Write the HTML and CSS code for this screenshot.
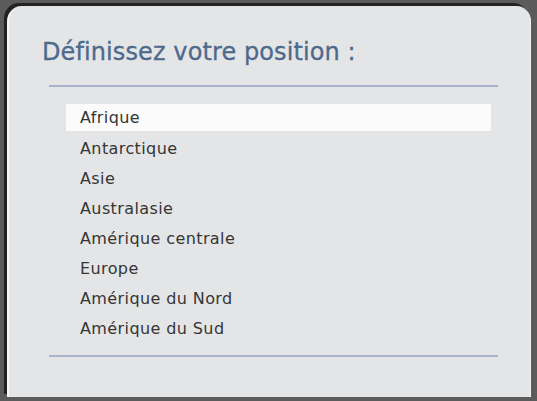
FILE: index.html
```html
<!DOCTYPE html>
<html lang="fr">
<head>
    <meta charset="UTF-8">
    <meta name="viewport" content="width=device-width, initial-scale=1.0">
    <title>Position</title>
    <link rel="stylesheet" href="styles.css">
</head>
<body>
    <div class="frame">
        <div class="panel">
            <h1 class="title">Définissez votre position :</h1>
            <hr class="rule">
            <ul class="regions">
                <li class="selected">Afrique</li>
                <li>Antarctique</li>
                <li>Asie</li>
                <li>Australasie</li>
                <li>Amérique centrale</li>
                <li>Europe</li>
                <li>Amérique du Nord</li>
                <li>Amérique du Sud</li>
            </ul>
            <hr class="rule rule-bottom">
        </div>
    </div>
</body>
</html>
```

FILE: styles.css
```css
html,
body {
    height: 100%;
}

body {
    margin: 0;
    background: #5b5b5b;
    font-family: 'DejaVu Sans', sans-serif;
}

.frame {
    box-sizing: border-box;
    height: 100%;
    padding: 6px 6px 4px 7px;
    display: flex;
}

.panel {
    flex: 1;
    background: #e4e5e7;
    border-radius: 15px 15px 0 0;
    border-left: 2px solid #f7f7f7;
    border-right: 1px solid #f3f3f3;
    box-shadow: -3px -3px 0 #222;
    padding: 0 32px 0 40px;
}

.title {
    margin: 31px 0 0 -7px;
    font-size: 24px;
    line-height: 30px;
    font-weight: normal;
    color: #4d6a8c;
    -webkit-text-stroke: 0.3px #4d6a8c;
    letter-spacing: 0.1px;
}

.rule {
    margin: 18px 0 0;
    border: none;
    height: 2px;
    background: #aab2cc;
}

.rule-bottom {
    margin-top: 0;
}

.regions {
    list-style: none;
    margin: 17px 7px 11px 17px;
    padding: 0;
}

.regions li {
    height: 30px;
    line-height: 30px;
    padding-left: 14px;
    font-size: 16px;
    letter-spacing: 0.4px;
    color: #353535;
}

.regions li.selected {
    background: #fbfbfb;
    height: 27px;
    line-height: 27px;
    margin-bottom: 3px;
}
```
